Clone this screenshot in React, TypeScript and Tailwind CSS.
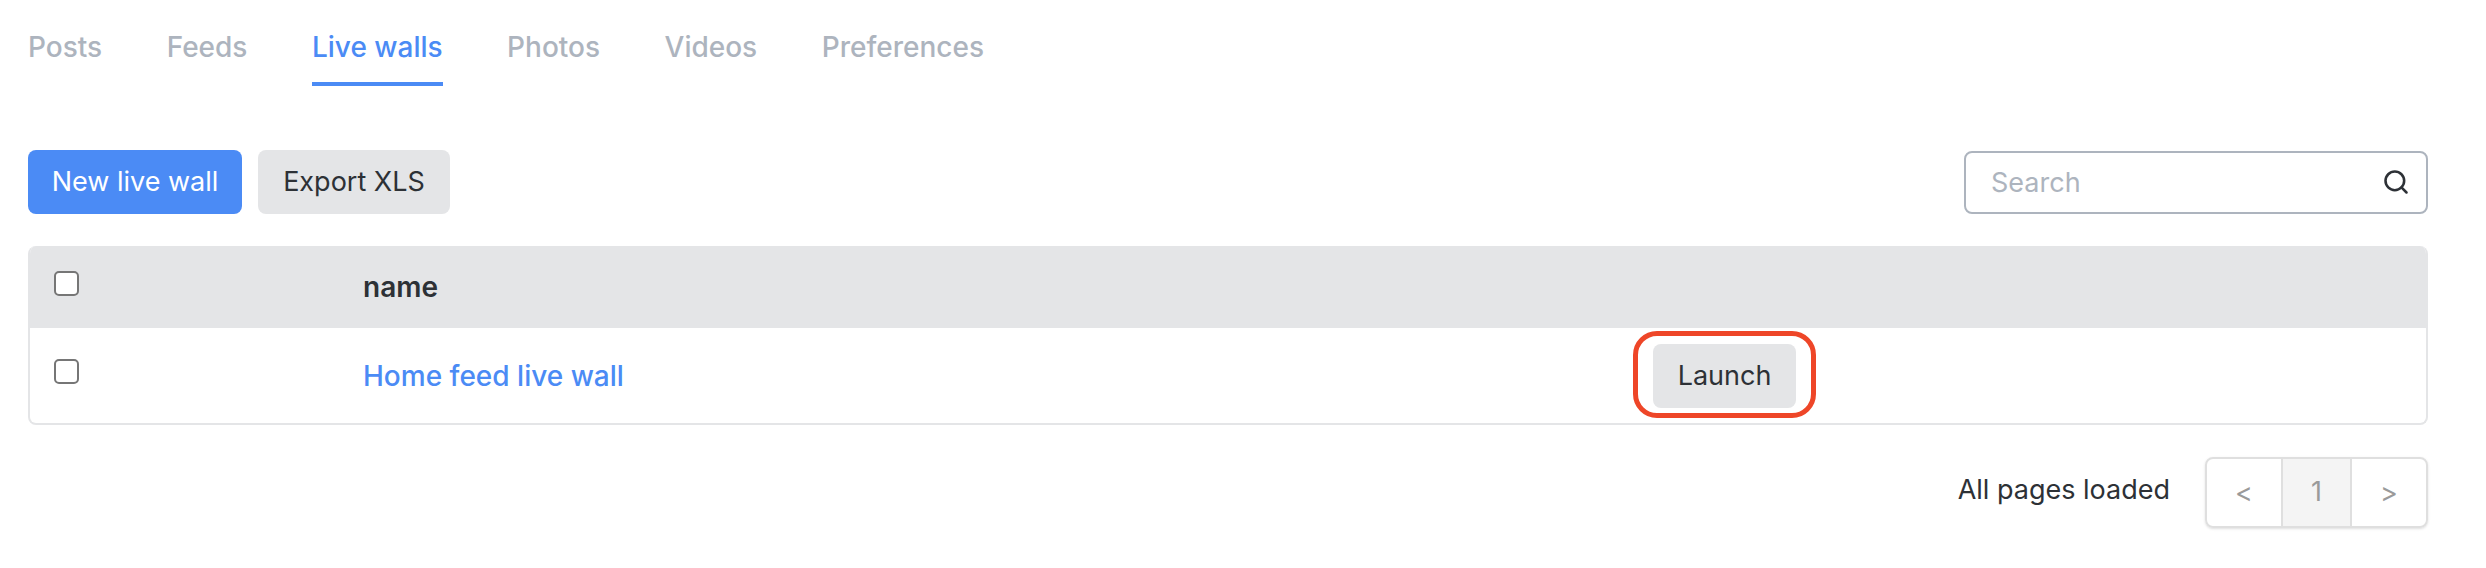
import { Search } from 'lucide-react'

const tabs = ['Posts', 'Feeds', 'Live walls', 'Photos', 'Videos', 'Preferences']

function Checkbox() {
  return <input type="checkbox" className="w-[25px] h-[25px] appearance-none bg-white rounded-[5px] border-2 border-[#767676] block" />
}

export default function App() {
  return (
    <div className="w-[2486px] h-[568px] bg-white pl-[28px] pr-[58px] font-['Inter',sans-serif] text-[#2d3136] overflow-hidden">
      {/* Tabs */}
      <div className="flex gap-[64.5px] pt-[28px] h-[150px]">
        {tabs.map(tab => (
          <div
            key={tab}
            className={`h-[58px] text-[28px] leading-[38px] font-medium border-b-4 ${tab === 'Live walls' ? 'text-[#4b8bf5] border-[#4b8bf5]' : 'text-[#adb4be] border-transparent'}`}
          >
            {tab}
          </div>
        ))}
      </div>

      {/* Toolbar */}
      <div className="flex items-center justify-between h-[64px]">
        <div className="flex gap-[16px]">
          <button className="h-[64px] w-[214px] rounded-[8px] bg-[#4b8bf5] text-white text-[27px]">New live wall</button>
          <button className="h-[64px] w-[192px] rounded-[8px] bg-[#e4e5e7] text-[27px]">Export XLS</button>
        </div>
        <div className="w-[464px] h-[63px] rounded-[8px] border-2 border-[#adb4be] flex items-center justify-between pl-[25px] pr-[16px]">
          <span className="text-[27px] text-[#adb4be] mt-[2px]">Search</span>
          <Search size={28} strokeWidth={2.2} className="text-[#2d3136]" />
        </div>
      </div>

      {/* Table */}
      <div className="mt-[32px] h-[179px] rounded-[8px] border-2 border-t-0 border-[#e4e5e7] overflow-hidden">
        <div className="h-[82px] bg-[#e4e5e7] -mx-[2px] flex items-center pl-[26px]">
          <div className="w-[309px] -mt-[8px]"><Checkbox /></div>
          <span className="text-[28px] font-semibold -mt-[1px]">name</span>
        </div>
        <div className="h-[95px] flex items-center pl-[24px]">
          <div className="w-[309px] -mt-[8px]"><Checkbox /></div>
          <a className="w-[1290px] text-[28px] font-medium text-[#4b8bf5]">Home feed live wall</a>
          <div className="relative mt-[1px]">
            <button className="h-[64px] w-[143px] rounded-[8px] bg-[#e4e5e7] text-[27px] block">Launch</button>
            <div className="absolute -left-[20px] -top-[13px] w-[183px] h-[87px] rounded-[24px] border-[5px] border-[#ee4628]" />
          </div>
        </div>
      </div>

      {/* Footer */}
      <div className="mt-[32px] flex items-center justify-end gap-[35px]">
        <span className="text-[27px] -mt-[5px]">All pages loaded</span>
        <div className="w-[223px] h-[71px] flex rounded-[8px] border-2 border-[#dfdfdf] shadow-sm text-[27px] text-[#9a9a9a] overflow-hidden">
          <div className="w-[74px] flex items-center justify-center pt-[2px]">&lt;</div>
          <div className="w-[71px] flex items-center justify-center bg-[#f4f4f4] border-x-2 border-[#dfdfdf]">1</div>
          <div className="flex-1 flex items-center justify-center pt-[2px]">&gt;</div>
        </div>
      </div>
    </div>
  )
}
